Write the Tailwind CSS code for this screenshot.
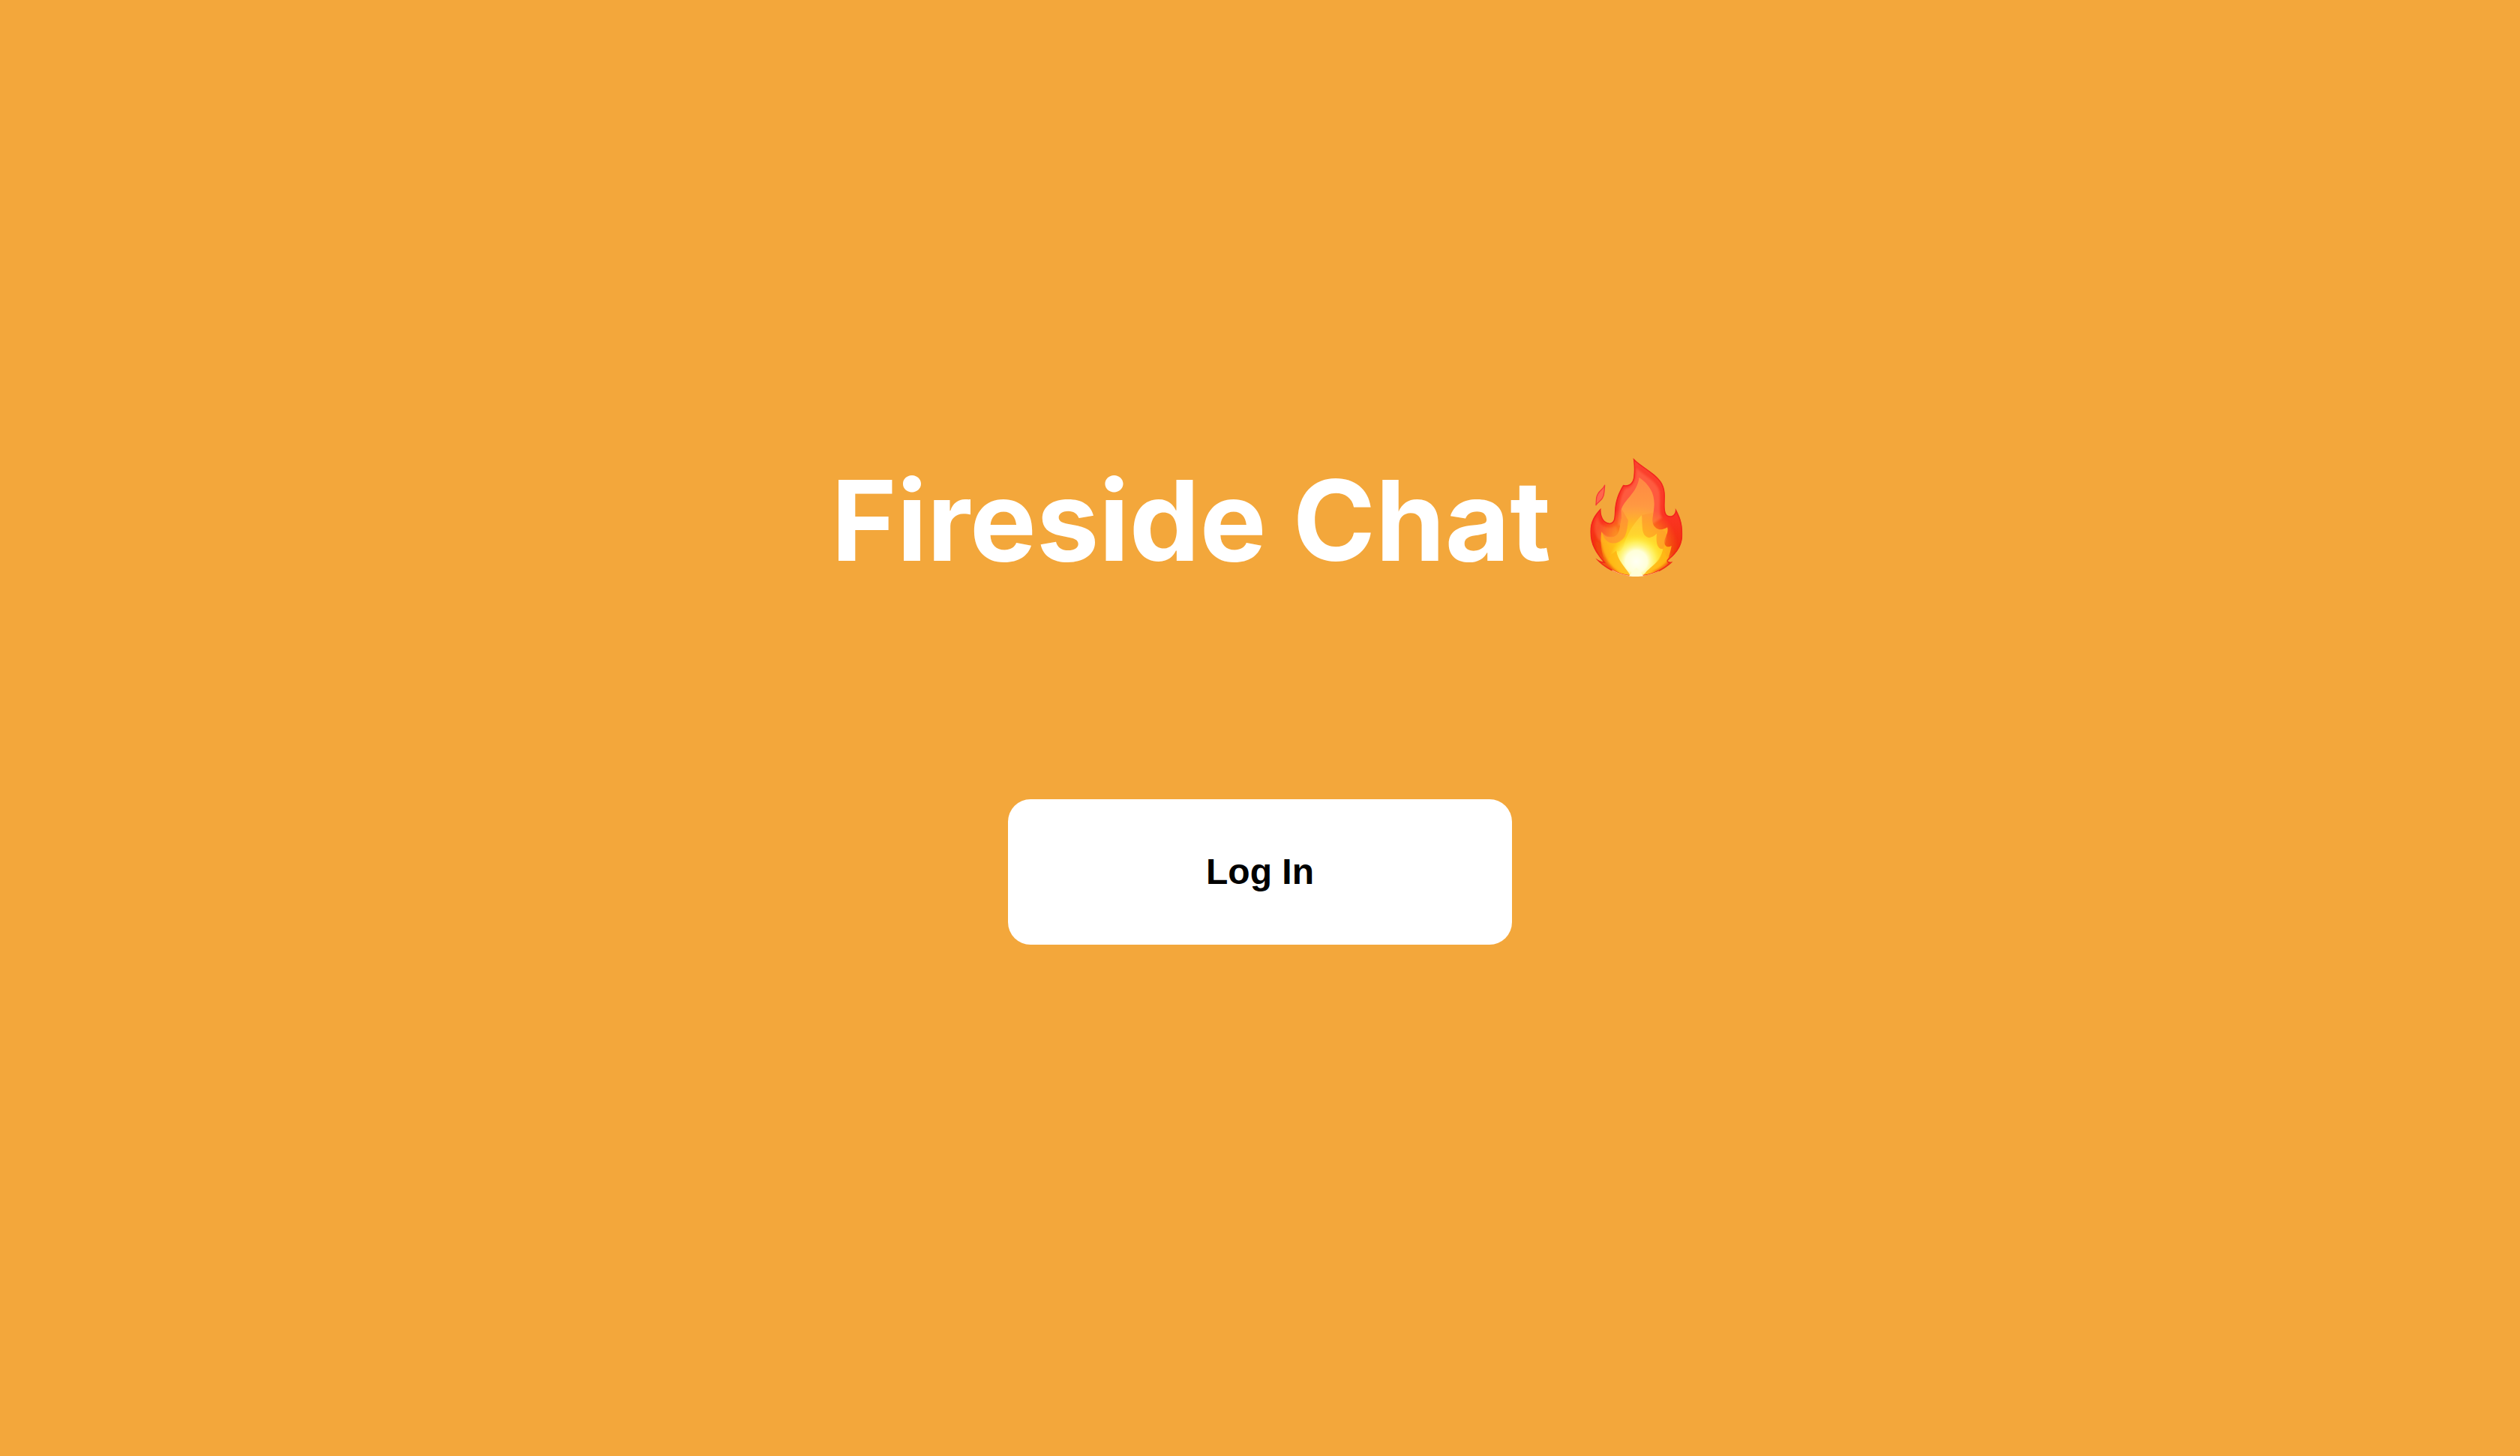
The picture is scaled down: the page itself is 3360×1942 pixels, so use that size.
<!DOCTYPE html>
<html lang="en">
<head>
<meta charset="utf-8">
<meta name="viewport" content="width=device-width, initial-scale=1">
<title>Fireside Chat</title>
<script src="https://cdn.jsdelivr.net/npm/@tailwindcss/browser@4"></script>
</head>
<body class="bg-[#f3a73b]">
<main class="flex min-h-screen flex-col items-center pt-[598px]">
  <h1 class="flex items-center gap-13 pr-2 font-['Inter',sans-serif] text-[149px] leading-[192px] font-bold text-white">
    <span>Fireside Chat</span>
    <svg class="mb-2 h-40 w-[124px]" viewBox="57 28 373 480" role="img" aria-label="Fire">
      <defs>
        <linearGradient id="body" x1="0" y1="0" x2="0" y2="1">
          <stop offset="0" stop-color="#fb4430"/>
          <stop offset=".5" stop-color="#fb3422"/>
          <stop offset=".8" stop-color="#f03008"/>
          <stop offset="1" stop-color="#ff9a30"/>
        </linearGradient>
        <linearGradient id="mid" gradientUnits="userSpaceOnUse" x1="0" y1="110" x2="0" y2="500">
          <stop offset="0" stop-color="#ff8844"/>
          <stop offset=".35" stop-color="#ff9c42"/>
          <stop offset=".6" stop-color="#ffa81c"/>
          <stop offset="1" stop-color="#ff9c10"/>
        </linearGradient>
        <linearGradient id="tongue" gradientUnits="userSpaceOnUse" x1="0" y1="258" x2="0" y2="500">
          <stop offset="0" stop-color="#ffc83c"/>
          <stop offset=".5" stop-color="#ffe030"/>
          <stop offset="1" stop-color="#ffe838"/>
        </linearGradient>
        <radialGradient id="halo" gradientUnits="userSpaceOnUse" cx="240" cy="390" r="170">
          <stop offset="0" stop-color="#ffe818"/>
          <stop offset=".45" stop-color="#ffd818" stop-opacity=".75"/>
          <stop offset="1" stop-color="#ffc020" stop-opacity="0"/>
        </radialGradient>
        <radialGradient id="glow" gradientUnits="userSpaceOnUse" cx="243" cy="445" r="110">
          <stop offset="0" stop-color="#fffff4"/>
          <stop offset=".4" stop-color="#ffffd8"/>
          <stop offset=".7" stop-color="#fff870" stop-opacity=".7"/>
          <stop offset="1" stop-color="#ffec20" stop-opacity="0"/>
        </radialGradient>
        <path id="shape" d="M230 30C262 64 325 92 346 132C364 166 355 195 357 230C358 252 364 263 378 263C393 263 402 250 399 231C417 262 428 290 428 335C428 388 400 416 370 441C368 447 378 449 389 446C350 484 300 505 240 506C180 506 112 474 79 432C89 440 100 445 110 446C82 411 58 380 58 325C58 287 74 258 101 231C98 264 112 291 137 291C155 290 155 268 156 245C158 202 170 171 190 138C210 143 229 134 232 105C235 80 234 57 230 30Z"/>
        <clipPath id="outline"><use href="#shape"/></clipPath>
        <filter id="soft" x="-20%" y="-20%" width="140%" height="140%"><feGaussianBlur stdDeviation="5"/></filter>
        <filter id="fine" x="-20%" y="-20%" width="140%" height="140%"><feGaussianBlur stdDeviation="1.5"/></filter>
      </defs>
      <g clip-path="url(#outline)">
        <use href="#shape" fill="url(#body)"/>
        <!-- lighter red inside the dark rim -->
        <path fill="#ff6444" filter="url(#soft)" opacity=".8" d="M242 70C280 104 328 125 336 165C342 210 332 250 346 270L300 300L170 300C172 250 172 190 198 152C228 150 244 120 242 70Z"/>
        <path fill="#fb5a30" filter="url(#soft)" opacity=".75" d="M88 262C92 300 128 322 162 300L175 350L110 370C72 350 66 300 88 262Z"/>
        <!-- orange layer with its right-hand hooks and left point -->
        <path fill="url(#mid)" filter="url(#fine)" d="M254 108C300 140 318 178 314 226C311 268 299 286 317 306C332 322 352 318 367 308C375 332 352 350 356 374C362 390 374 388 384 382C378 418 368 432 371 446C330 500 290 506 240 506C185 506 130 470 115 444C100 400 98 362 103 325C112 342 125 349 145 347C182 342 174 302 184 270L182 240C190 200 248 170 254 108Z"/>
        <circle cx="240" cy="390" r="170" fill="url(#halo)" opacity=".8"/>
        <path fill="#ff8438" opacity=".55" filter="url(#fine)" d="M184 235C181 290 179 305 171 326C160 350 125 352 105 325C110 352 128 372 150 372C205 368 205 320 210 280Z"/>
        <path fill="#ff9030" opacity=".4" filter="url(#fine)" d="M262 260C268 310 262 342 294 350C310 348 318 340 325 333C319 373 330 398 350 395C374 340 365 320 340 318C306 310 304 286 310 250Z"/>
        <path fill="url(#tongue)" filter="url(#fine)" opacity=".8" d="M265 258C268 310 262 342 294 350C310 348 318 340 325 333C319 373 330 398 350 395C342 440 300 465 268 504L218 504C198 460 163 450 165 402C172 408 184 404 191 386C200 345 228 297 265 258Z"/>
        <ellipse cx="243" cy="440" rx="110" ry="110" fill="url(#glow)"/>
        <path fill="#ffb814" filter="url(#fine)" opacity=".9" d="M162 402C172 450 202 470 220 504C182 502 142 480 120 448L140 420ZM352 396C344 450 300 460 268 504C320 500 350 480 372 448Z"/>
        <!-- red lower sides and rim -->
        <path fill="#f04a0c" filter="url(#soft)" opacity=".75" d="M70 425L108 446C95 420 84 400 80 365L100 370C108 420 130 460 175 492L130 490ZM395 440L370 442C350 468 325 480 300 490L340 486Z"/>
        <use href="#shape" fill="none" stroke="#f0201c" stroke-width="9" filter="url(#fine)" opacity=".8"/>
        <path fill="none" stroke="#ffba70" stroke-width="6" filter="url(#fine)" d="M145 482Q190 506 240 507Q292 506 335 486"/>
        <path fill="#ffffd8" filter="url(#fine)" d="M212 506Q230 480 243 470Q256 480 272 506Z"/>
      </g>
      <path d="M116 139C111 157 87 161 83 190L81 219C88 204 112 202 114 165Z" fill="#ff674c" stroke="#f53a38" stroke-width="4" stroke-linejoin="round"/>
    </svg>
  </h1>
  <button type="button" class="mt-[276px] h-[194px] w-1/5 rounded-[30px] bg-white font-['Liberation_Sans',sans-serif] text-5xl font-bold text-black">Log In</button>
</main>
</body>
</html>
